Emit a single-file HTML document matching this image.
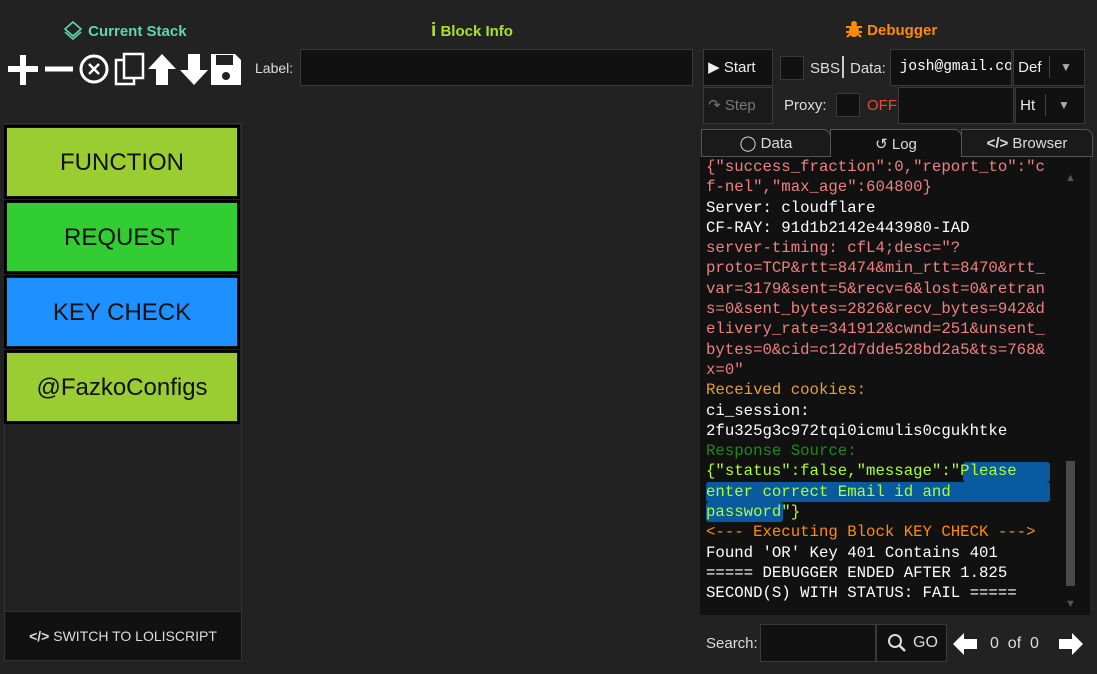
<!DOCTYPE html><html><head><style>
body{margin:0;width:1097px;height:674px;background:#222;overflow:hidden;font-family:"Liberation Sans",sans-serif;position:relative}
.a{position:absolute}
.blk{position:absolute;left:6px;width:230px;height:68px;border:1px solid #111;text-align:center;line-height:70px;font-size:24px;color:#111;outline:2px solid #000}
.log{position:absolute;left:706px;top:157px;font-family:"Liberation Mono",monospace;font-size:15.7px;line-height:20.3px;color:#fff;white-space:pre}
.inp{position:absolute;background:#111;border:1px solid #3a3a3a}
.w{color:#ddd;font-size:15px}
</style></head><body>
<div class="a" style="left:62px;top:20px;color:#5fd6b0;font-weight:bold;font-size:15px"><svg width="22" height="20" viewBox="0 0 22 20" style="vertical-align:-4px"><path d="M11 2L19 9L11 16L3 9Z" fill="none" stroke="#5fd6b0" stroke-width="1.6"/><path d="M3 12L11 19L19 12" fill="none" stroke="#5fd6b0" stroke-width="1.6"/></svg> Current Stack</div>
<div class="a" style="left:431px;top:20px;color:#a8e22a;font-weight:bold;font-size:15px"><b style="font-size:19px">i</b> Block Info</div>
<div class="a" style="left:845px;top:20px;color:#ff8c00;font-weight:bold;font-size:15px"><svg width="18" height="18" viewBox="0 0 18 18" style="vertical-align:-3px"><ellipse cx="9" cy="11" rx="5" ry="6" fill="#ff8c00"/><circle cx="9" cy="4" r="3" fill="#ff8c00"/><path d="M1 7h16M1 12h16M2 17l3-3M16 17l-3-3" stroke="#ff8c00" stroke-width="2"/></svg> Debugger</div>
<svg class="a" style="left:0;top:50px" width="250" height="40" viewBox="0 0 250 40">
<path d="M8 19h30M23 5v30" stroke="#fff" stroke-width="6"/>
<path d="M45 19h28" stroke="#fff" stroke-width="5"/>
<circle cx="94" cy="19" r="13" fill="none" stroke="#fff" stroke-width="3"/><path d="M89 14l10 10M99 14l-10 10" stroke="#fff" stroke-width="2.5"/>
<rect x="116" y="10" width="18" height="24" fill="none" stroke="#fff" stroke-width="2.5"/><rect x="124" y="4" width="19" height="24" fill="#222" stroke="#fff" stroke-width="2.5"/>
<path d="M162 4L176 19H168V35H156V19H148Z" fill="#fff"/>
<path d="M194 35L180 20H188V4H200V20H208Z" fill="#fff"/>
<path d="M211 4H235L241 10V35H211Z" fill="#fff"/><rect x="216" y="5" width="17" height="10" fill="#222"/><circle cx="226" cy="26" r="4" fill="#222"/>
</svg>
<div class="a w" style="left:255px;top:60px;font-size:14px">Label:</div>
<div class="inp" style="left:300px;top:49px;width:391px;height:35px"></div>
<div class="a" style="left:4px;top:123px;width:236px;height:487px;border:1px solid #333"></div>
<div class="blk" style="top:127px;background:#9acd32">FUNCTION</div>
<div class="blk" style="top:202px;background:#32cd32">REQUEST</div>
<div class="blk" style="top:277px;background:#1e90ff">KEY CHECK</div>
<div class="blk" style="top:352px;background:#9acd32">@FazkoConfigs</div>
<div class="a" style="left:4px;top:611px;width:236px;height:48px;background:#111;border:1px solid #333;color:#ddd;font-size:14px;line-height:48px;text-align:center"><b>&lt;/&gt;</b> SWITCH TO LOLISCRIPT</div>

<div class="inp" style="left:703px;top:49px;width:68px;height:35px;color:#eee;font-size:15px;line-height:35px">&nbsp;&#9654; Start</div>
<div class="inp" style="left:703px;top:87px;width:68px;height:35px;background:#1a1a1a;color:#777;font-size:15px;line-height:35px">&nbsp;&#8631; Step</div>
<div class="inp" style="left:780px;top:56px;width:22px;height:22px"></div>
<div class="a w" style="left:810px;top:60px">SBS</div>
<div class="a" style="left:842px;top:56px;width:2px;height:22px;background:#ccc"></div>
<div class="a w" style="left:850px;top:60px">Data:</div>
<div class="inp" style="left:890px;top:49px;width:120px;height:35px;color:#fff;font-family:'Liberation Mono',monospace;font-size:14.5px;line-height:35px;overflow:hidden;white-space:nowrap">&nbsp;josh@gmail.co</div>
<div class="inp" style="left:1013px;top:49px;width:70px;height:35px;color:#eee;font-size:15px;line-height:35px;overflow:hidden">&nbsp;Def<span style="position:absolute;left:35px;top:6px;height:22px;border-left:1px solid #444"></span><span style="position:absolute;left:46px;color:#aaa;font-size:12px">&#9660;</span></div>
<div class="a w" style="left:784px;top:97px">Proxy:</div>
<div class="inp" style="left:836px;top:93px;width:22px;height:22px"></div>
<div class="a" style="left:867px;top:97px;color:#e84a3a;font-size:15px">OFF</div>
<div class="inp" style="left:898px;top:87px;width:114px;height:35px"></div>
<div class="inp" style="left:1015px;top:87px;width:68px;height:35px;color:#eee;font-size:15px;line-height:35px">&nbsp;Ht<span style="position:absolute;left:29px;top:6px;height:22px;border-left:1px solid #444"></span><span style="position:absolute;left:42px;color:#aaa;font-size:12px">&#9660;</span></div>

<div class="a" style="left:701px;top:129px;width:128px;height:26px;background:#1a1a1a;border:1px solid #555;border-radius:0 8px 0 0;color:#ddd;font-size:15px;line-height:28px;text-align:center">&#9711; Data</div>
<div class="a" style="left:830px;top:129px;width:130px;height:28px;background:#111;border:1px solid #555;border-bottom:none;border-radius:0 8px 0 0;color:#ddd;font-size:15px;line-height:30px;text-align:center">&#8634; Log</div>
<div class="a" style="left:961px;top:129px;width:130px;height:26px;background:#1a1a1a;border:1px solid #555;border-radius:0 8px 0 0;color:#ddd;font-size:15px;line-height:28px;text-align:center"><b>&lt;/&gt;</b> Browser</div>
<div class="a" style="left:700px;top:157px;width:390px;height:458px;background:#111"></div>
<div class="a" style="left:1065px;top:172px;color:#555;font-size:11px">&#9650;</div>
<div class="a" style="left:1065px;top:598px;color:#555;font-size:11px">&#9660;</div>
<div class="a" style="left:1066px;top:461px;width:9px;height:125px;background:#4a4a4a"></div>
<div class="a" style="left:963px;top:462px;width:87px;height:20px;background:#0a5aa0;border-radius:3px"></div>
<div class="a" style="left:706px;top:482px;width:344px;height:20px;background:#0a5aa0;border-radius:3px"></div>
<div class="a" style="left:706px;top:502px;width:77px;height:20px;background:#0a5aa0;border-radius:3px"></div>
<div class="log"><span style="color:#f08080">{"success_fraction":0,"report_to":"c
f-nel","max_age":604800}</span>
Server: cloudflare
CF-RAY: 91d1b2142e443980-IAD
<span style="color:#f08080">server-timing: cfL4;desc="?
proto=TCP&amp;rtt=8474&amp;min_rtt=8470&amp;rtt_
var=3179&amp;sent=5&amp;recv=6&amp;lost=0&amp;retran
s=0&amp;sent_bytes=2826&amp;recv_bytes=942&amp;d
elivery_rate=341912&amp;cwnd=251&amp;unsent_
bytes=0&amp;cid=c12d7dde528bd2a5&amp;ts=768&amp;
x=0"</span>
<span style="color:#e8a030">Received cookies:</span>
ci_session:
2fu325g3c972tqi0icmulis0cgukhtke
<span style="color:#1e8a1e">Response Source:</span>
<span style="color:#adff2f">{"status":false,"message":"Please
enter correct Email id and
password"}</span>
<span style="color:#ff8c00">&lt;--- Executing Block KEY CHECK ---&gt;</span>
Found 'OR' Key 401 Contains 401
===== DEBUGGER ENDED AFTER 1.825
SECOND(S) WITH STATUS: FAIL =====</div>
<div class="a w" style="left:706px;top:635px">Search:</div>
<div class="inp" style="left:760px;top:624px;width:114px;height:36px"></div>
<div class="inp" style="left:876px;top:624px;width:69px;height:36px;color:#ddd;font-size:16px;line-height:36px"><svg class="a" style="left:10px;top:8px" width="20" height="20" viewBox="0 0 20 20"><circle cx="8" cy="8" r="6" fill="none" stroke="#ddd" stroke-width="2"/><path d="M12 12l6 6" stroke="#ddd" stroke-width="2.5"/></svg><span class="a" style="left:36px">GO</span></div>
<div class="a" style="left:952px;top:631px"><svg width="26" height="26" viewBox="0 0 26 26"><path d="M1 13L12 2V8H25V18H12V24Z" fill="#fff"/></svg></div>
<div class="a w" style="left:990px;top:635px;font-size:16px">0 &nbsp;of &nbsp;0</div>
<div class="a" style="left:1058px;top:631px"><svg width="26" height="26" viewBox="0 0 26 26"><path d="M25 13L14 2V8H1V18H14V24Z" fill="#fff"/></svg></div>
</body></html>
